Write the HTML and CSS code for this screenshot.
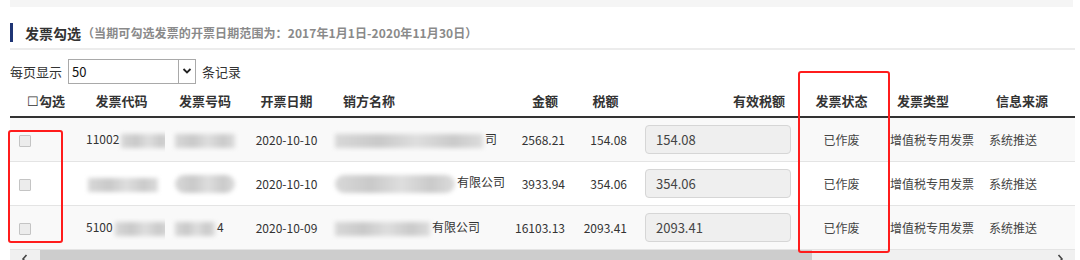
FILE: index.html
```html
<!DOCTYPE html>
<html lang="zh">
<head>
<meta charset="utf-8">
<link rel="stylesheet" href="styles.css">
</head>
<body>
<div class="page">
  <div class="topbar"></div>
  <div class="section-title">
    <span class="mark"></span>
    <span class="title">发票勾选</span>
    <span class="sub">（当期可勾选发票的开票日期范围为：2017年1月1日-2020年11月30日）</span>
  </div>
  <div class="pager">
    <span>每页显示</span>
    <span class="select"><span class="val">50</span><span class="arrow"><svg width="10" height="8" viewBox="0 0 10 8"><path d="M1.5 2 L5 5.5 L8.5 2" fill="none" stroke="#222" stroke-width="1.8"/></svg></span></span>
    <span>条记录</span>
  </div>
  <div class="table-wrap">
    <table class="grid">
      <colgroup>
        <col class="c1"><col class="c2"><col class="c3"><col class="c4"><col class="c5"><col class="c6"><col class="c7"><col class="c8"><col class="c9"><col class="c10"><col class="c11">
      </colgroup>
      <thead>
        <tr>
          <th class="h-chk"><span class="box-glyph">☐</span>勾选</th>
          <th class="center">发票代码</th>
          <th class="center">发票号码</th>
          <th class="center">开票日期</th>
          <th class="h-name">销方名称</th>
          <th class="h-amt">金额</th>
          <th class="h-tax">税额</th>
          <th class="h-eff">有效税额</th>
          <th class="center">发票状态</th>
          <th class="h-type">发票类型</th>
          <th class="h-src">信息来源</th>
        </tr>
      </thead>
      <tbody>
        <tr class="odd">
          <td class="d-chk"><span class="cb"></span></td>
          <td class="d-code">11002<span class="blur w50"></span></td>
          <td class="d-no"><span class="blur w60"></span></td>
          <td class="center">2020-10-10</td>
          <td class="d-name"><span class="blur w150"></span>司</td>
          <td class="d-amt">2568.21</td>
          <td class="d-tax">154.08</td>
          <td class="d-eff"><span class="inp">154.08</span></td>
          <td class="center d-st">已作废</td>
          <td class="d-type">增值税专用发票</td>
          <td class="d-src">系统推送</td>
        </tr>
        <tr>
          <td class="d-chk"><span class="cb"></span></td>
          <td class="d-code"><span class="blur w70"></span></td>
          <td class="d-no"><span class="blur w60 round"></span></td>
          <td class="center">2020-10-10</td>
          <td class="d-name"><span class="blur w125 round"></span>有限公司</td>
          <td class="d-amt">3933.94</td>
          <td class="d-tax">354.06</td>
          <td class="d-eff"><span class="inp">354.06</span></td>
          <td class="center d-st">已作废</td>
          <td class="d-type">增值税专用发票</td>
          <td class="d-src">系统推送</td>
        </tr>
        <tr class="odd">
          <td class="d-chk"><span class="cb"></span></td>
          <td class="d-code">5100<span class="blur w55"></span></td>
          <td class="d-no"><span class="blur w40"></span>4</td>
          <td class="center">2020-10-09</td>
          <td class="d-name"><span class="blur w100"></span>有限公司</td>
          <td class="d-amt">16103.13</td>
          <td class="d-tax">2093.41</td>
          <td class="d-eff"><span class="inp">2093.41</span></td>
          <td class="center d-st">已作废</td>
          <td class="d-type">增值税专用发票</td>
          <td class="d-src">系统推送</td>
        </tr>
      </tbody>
    </table>
    <div class="hscroll">
      <span class="arr"><svg width="8" height="10" viewBox="0 0 8 10"><path d="M5.5 1 L2 5 L5.5 9" fill="none" stroke="#444" stroke-width="1.6"/></svg></span>
      <span class="thumb"></span>
      <span class="track"></span>
      <span class="arr"><svg width="8" height="10" viewBox="0 0 8 10"><path d="M2.5 1 L6 5 L2.5 9" fill="none" stroke="#444" stroke-width="1.6"/></svg></span>
    </div>
  </div>
  <div class="mark-red left"></div>
  <div class="mark-red right"></div>
</div>
</body>
</html>
```

FILE: styles.css
```css
* { box-sizing: border-box; }
html, body { margin: 0; padding: 0; background: #fff; }
body {
  font-family: "Noto Sans CJK SC", "Microsoft YaHei", sans-serif;
  color: #333;
  width: 1080px;
  height: 260px;
  overflow: hidden;
}
.page { position: relative; padding: 0 5px 0 10px; }
.topbar { height: 7px; background: #f5f5f5; margin-right: 2px; }
.section-title {
  display: flex;
  align-items: center;
  height: 43px;
  padding-top: 10px;
  border-bottom: 2px solid #ececec;
}
.section-title .mark { width: 3px; height: 19px; background: #1f3575; margin-right: 12px; }
.section-title .title { font-size: 14px; font-weight: 700; color: #333; }
.section-title .sub { font-size: 12px; font-weight: 700; color: #8a8a8a; margin-left: 1px; letter-spacing: 0.1px; }
.pager {
  display: flex;
  align-items: center;
  gap: 6px;
  height: 36px;
  padding-top: 6px;
  font-size: 13px;
  color: #333;
}
.select {
  display: flex;
  width: 128px;
  height: 25px;
  border: 1px solid #a9a9a9;
  background: #fff;
}
.select .val { flex: 1; font-size: 13px; padding-left: 3px; line-height: 23px; color: #111; }
.select .arrow {
  width: 17px;
  border-left: 1px solid #a9a9a9;
  display: flex; align-items: center; justify-content: center;
  background: #fff;
}
.table-wrap { width: 1065px; }
.grid { border-collapse: collapse; table-layout: fixed; width: 1065px; }
.c1 { width: 68px; } .c2 { width: 87px; } .c3 { width: 80px; } .c4 { width: 83px; }
.c5 { width: 177px; } .c6 { width: 67px; } .c7 { width: 63px; } .c8 { width: 165px; }
.c9 { width: 83px; } .c10 { width: 100px; } .c11 { width: 92px; }
th {
  height: 31px;
  font-size: 13px;
  font-weight: 700;
  color: #333;
  border-bottom: 2px solid #333;
  padding: 0 0 2px;
  white-space: nowrap;
}
td {
  height: 44px;
  font-size: 12px;
  color: #333;
  border-bottom: 1px solid #e4e4e4;
  padding: 0;
  white-space: nowrap;
  overflow: hidden;
}
tr.odd td { background: #f9f9f9; }
.center { text-align: center; }
.h-chk { text-align: left; padding-left: 17px; }
.box-glyph { font-weight: 400; font-size: 13px; }
.h-name { text-align: left; padding-left: 15px; }
.h-amt { text-align: right; padding-right: 14px; }
.h-tax { text-align: center; padding-left: 4px; }
.h-eff { text-align: right; padding-right: 15px; }
.h-type { text-align: left; padding-left: 14px; }
.h-src { text-align: left; padding-left: 13px; }
.d-chk { padding-left: 9px; }
.cb {
  display: inline-block; width: 12px; height: 12px;
  border: 1px solid #c4c4c4; background: #ececec; border-radius: 1px; vertical-align: middle;
}
.d-code { padding-left: 8px; }
.d-no { padding-left: 8px; text-align: left; }
.d-name { padding-left: 5px; }
.d-amt { text-align: right; padding-right: 7px; }
.d-tax { text-align: right; padding-right: 8px; }
.d-eff { padding-left: 10px; }
.inp {
  display: flex; align-items: center;
  width: 146px; height: 29px;
  border: 1px solid #d6d6d6; border-radius: 4px;
  background: #efefef; padding-left: 10px; font-size: 13px; color: #444;
}
.d-st { color: #444; }
.d-type { padding-left: 7px; color: #444; }
.d-src { padding-left: 6px; color: #444; }
.blur {
  display: inline-block; height: 14px; vertical-align: middle;
  background: linear-gradient(90deg, #d8d8d8, #c9c9c9 30%, #dedede 55%, #cacaca 80%, #dcdcdc);
  filter: blur(2px);
  margin: 0 2px;
}
.blur.round { border-radius: 10px; height: 18px; }
.w40 { width: 40px; } .w50 { width: 50px; } .w55 { width: 55px; } .w60 { width: 60px; } .w70 { width: 70px; }
.w100 { width: 95px; } .w125 { width: 120px; } .w150 { width: 148px; }
.hscroll {
  display: flex; align-items: flex-start; height: 12px; background: #f0f0f0;
}
.hscroll .arr { width: 30px; height: 12px; display: flex; justify-content: center; padding-top: 4px; }
.hscroll .thumb { width: 772px; height: 12px; background: #cdcdcd; }
.hscroll .track { flex: 1; }
.mark-red {
  position: absolute;
  border: 2px solid #ff1c1c;
  border-radius: 3px;
}
.mark-red.left { left: 8px; top: 130px; width: 55px; height: 113px; }
.mark-red.right { left: 798px; top: 71px; width: 92px; height: 182px; }
```
